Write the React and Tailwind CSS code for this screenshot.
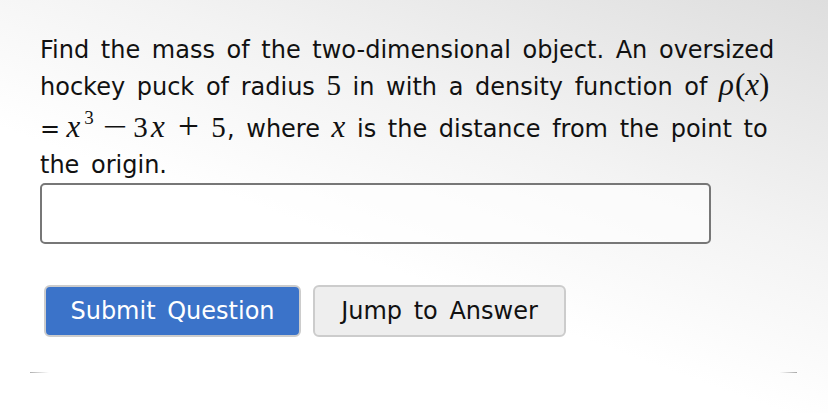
function Box({ children, className = "", size = "text-[31px]" }) {
  return (
    <span className={"inline-block text-center leading-none [font-family:'Liberation_Serif',serif] " + size + " " + className}>
      {children}
    </span>
  );
}

export default function App() {
  return (
    <div className="w-[828px] h-[413px] overflow-hidden bg-[linear-gradient(200deg,#dedede_0%,#f3f3f3_35%,#ffffff_60%)] [font-family:'DejaVu_Sans',sans-serif] text-[#111]">
      <div className="pt-[32px] pl-[40px] text-[24px] leading-[36px] [word-spacing:4px] whitespace-nowrap">
        <div className="h-[37px]">Find the mass of the two-dimensional object. An oversized</div>
        <div className="h-[36px]">
          hockey puck of radius <Box size="text-[29px]">5</Box> in with a density function of{" "}
          <Box className="italic">ρ</Box>
          <Box className="ml-[1px]">(</Box>
          <Box className="italic">x</Box>
          <Box>)</Box>
        </div>
        <div className="h-[42px] pt-[6px]">
          <span className="inline-block w-[23px]">=</span>
          <Box className="italic w-[21px]">x</Box>
          <Box size="text-[19px]" className="w-[10px] relative top-[-13px]">3</Box>
          <Box className="ml-[9px] w-[24px] scale-x-[1.4]">−</Box>
          <Box size="text-[29px]" className="ml-[6px] w-[15px]">3</Box>
          <Box className="italic w-[20px]">x</Box>
          <Box className="ml-[9px] w-[23px] scale-[1.2]">+</Box>
          <Box size="text-[29px]" className="ml-[10px] w-[17px]">5</Box>
          , where <Box className="italic">x</Box> is the distance from the point to
        </div>
        <div className="h-[36px]">the origin.</div>
      </div>
      <div className="pl-[40px]">
        <div className="w-[671px] h-[61px] rounded-[5px] border-2 border-[#777777] bg-white/60"></div>
      </div>
      <div className="flex gap-[12px] pl-[44px] pt-[41px]">
        <button className="w-[257px] h-[52px] rounded-[6px] border-2 border-[#cccccc] bg-[#3b73c9] text-white text-[24px] [word-spacing:4px]">
          Submit Question
        </button>
        <button className="w-[253px] h-[52px] rounded-[6px] border-2 border-[#cccccc] bg-[#eeeeee] text-[#111] text-[24px] [word-spacing:4px]">
          Jump to Answer
        </button>
      </div>
      <div className="flex justify-between pl-[30px] pr-[31px] pt-[35px]">
        <div className="w-[19px] h-[1px] bg-[linear-gradient(to_right,#b0b0b0,#ffffff)]"></div>
        <div className="w-[18px] h-[1px] bg-[linear-gradient(to_right,#ffffff,#a8a8a8)]"></div>
      </div>
    </div>
  );
}
